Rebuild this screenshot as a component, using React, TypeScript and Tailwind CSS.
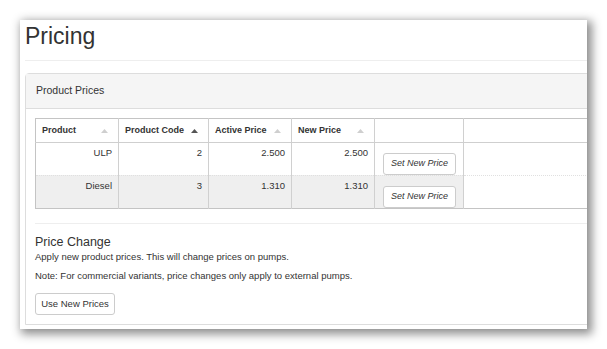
const FONT = { fontFamily: '"Liberation Sans", Arial, sans-serif' };

interface PriceRow {
  product: string;
  code: number;
  active: string;
  next: string;
}

const ROWS: PriceRow[] = [
  { product: 'ULP', code: 2, active: '2.500', next: '2.500' },
  { product: 'Diesel', code: 3, active: '1.310', next: '1.310' },
];

const SortArrow = ({ active = false }: { active?: boolean }) => (
  <svg className="h-[4px] w-[7px]" viewBox="0 0 7 4">
    <path d="M3.5 0 L7 4 L0 4 Z" fill={active ? '#555' : '#cfcfcf'} />
  </svg>
);

const HeaderCell = ({ label, active, width }: { label: string; active?: boolean; width: string }) => (
  <th className={`${width} h-[24px] border-r border-b border-r-[#d0d0d0] border-b-[#cfcfcf] border-b-dotted px-[6px] text-left align-middle`}>
    <div className="flex items-center justify-between pr-[4px]">
      <span className="text-[9px] font-bold whitespace-nowrap text-[#333]">{label}</span>
      <SortArrow active={active} />
    </div>
  </th>
);

const App = () => {
  return (
    <div className="h-[349px] w-[607px] bg-white pt-[20px] pl-[20px]" style={FONT}>
      <div className="h-[309px] w-[567px] overflow-hidden bg-white shadow-[3px_3px_9px_2px_rgba(0,0,0,0.45)]">
        <div className="pl-[5px]">
          <h1 className="mt-[2px] text-[23px] leading-[28px] font-normal text-[#333]">Pricing</h1>
          <div className="mt-[10px] border-t border-[#eee]" />

          {/* Product prices panel */}
          <div className="mt-[12px] w-[600px] rounded-tl-[4px] border border-[#ddd]">
            <div className="flex h-[35px] items-center border-b border-[#ddd] bg-[#f5f5f5] px-[10px]">
              <span className="text-[10.5px] text-[#333]">Product Prices</span>
            </div>

            <div className="pt-[9px] pr-0 pb-[9px] pl-[9px]">
              <table className="w-[600px] table-fixed border-collapse border border-[#c4c4c4] text-[#333]">
                <thead>
                  <tr>
                    <HeaderCell label="Product" width="w-[83px]" />
                    <HeaderCell label="Product Code" width="w-[90px]" active />
                    <HeaderCell label="Active Price" width="w-[83px]" />
                    <HeaderCell label="New Price" width="w-[83px]" />
                    <th className="h-[24px] w-[89px] border-r border-b border-r-[#d0d0d0] border-b-[#cfcfcf] border-b-dotted" />
                    <th className="border-b border-b-[#cfcfcf] border-b-dotted" />
                  </tr>
                </thead>
                <tbody>
                  {ROWS.map((row, i) => {
                    const bg = i % 2 === 1 ? 'bg-[#efefef]' : 'bg-white';
                    const cell = `${bg} border-r border-r-[#d0d0d0] px-[6px] pt-[4px] text-right align-top text-[9.5px] leading-[11px]`;
                    return (
                      <tr key={row.product} className={i === 0 ? 'h-[32px] border-b border-dotted border-[#e0e0e0]' : 'h-[33px]'}>
                        <td className={cell}>{row.product}</td>
                        <td className={cell}>{row.code}</td>
                        <td className={cell}>{row.active}</td>
                        <td className={cell}>{row.next}</td>
                        <td className={`${bg} border-r border-r-[#d0d0d0] pt-[6px] pl-[8px] align-top`}>
                          <button className="h-[22px] w-[73px] rounded-[3px] border border-[#ccc] bg-white text-[9px] text-[#333] italic">
                            Set New Price
                          </button>
                        </td>
                        <td className="bg-white" />
                      </tr>
                    );
                  })}
                </tbody>
              </table>

              <div className="mt-[14px] border-t border-[#eee]" />

              <h3 className="mt-[10px] text-[12.5px] leading-[16px] font-normal text-[#333]">Price Change</h3>
              <p className="text-[9.5px] leading-[13px] text-[#333]">Apply new product prices. This will change prices on pumps.</p>
              <p className="mt-[6px] text-[9.5px] leading-[13px] text-[#333]">
                Note: For commercial variants, price changes only apply to external pumps.
              </p>
              <button className="mt-[11px] h-[22px] w-[80px] rounded-[3px] border border-[#ccc] bg-white text-[9.5px] text-[#333]">
                Use New Prices
              </button>
            </div>
          </div>
        </div>
      </div>
    </div>
  );
};

export default App;
